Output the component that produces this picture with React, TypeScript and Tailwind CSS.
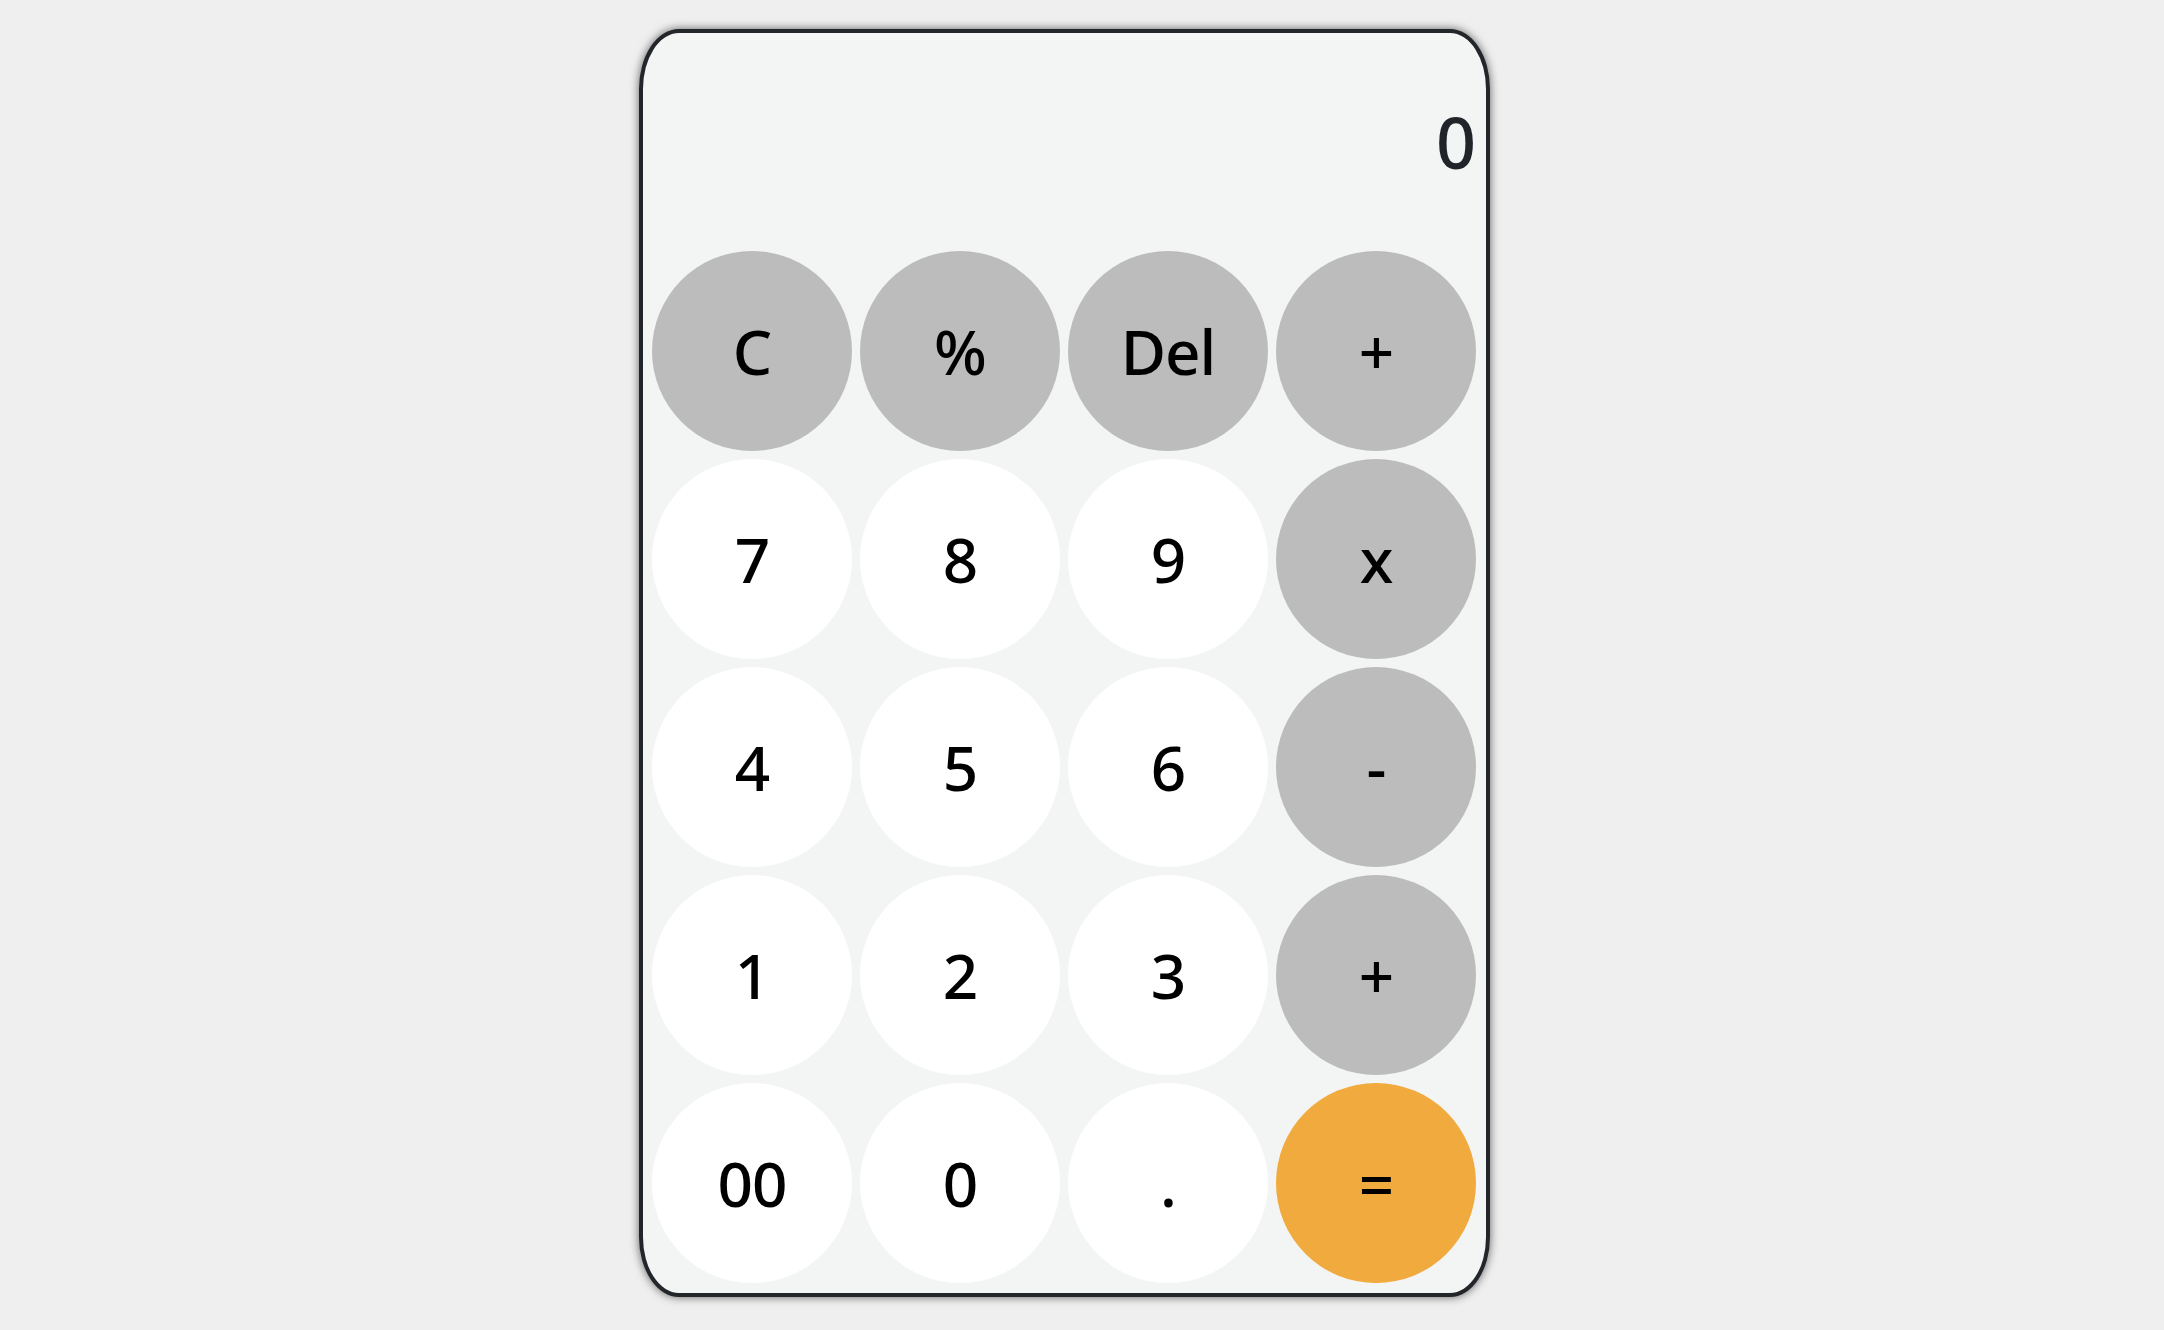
import React from "react";

type Key = { label: string; kind: "op" | "num" | "eq" };

const keys: Key[] = [
  { label: "C", kind: "op" },
  { label: "%", kind: "op" },
  { label: "Del", kind: "op" },
  { label: "+", kind: "op" },
  { label: "7", kind: "num" },
  { label: "8", kind: "num" },
  { label: "9", kind: "num" },
  { label: "x", kind: "op" },
  { label: "4", kind: "num" },
  { label: "5", kind: "num" },
  { label: "6", kind: "num" },
  { label: "-", kind: "op" },
  { label: "1", kind: "num" },
  { label: "2", kind: "num" },
  { label: "3", kind: "num" },
  { label: "+", kind: "op" },
  { label: "00", kind: "num" },
  { label: "0", kind: "num" },
  { label: ".", kind: "num" },
  { label: "=", kind: "eq" },
];

const keyColors = {
  op: "bg-[#bcbcbc]",
  num: "bg-white",
  eq: "bg-[#f1aa3e]",
};

export default function App() {
  return (
    <div className="min-h-screen bg-[#efefef] pt-[29px] pl-[639px]">
      {/* Calculator body */}
      <div className="w-[851px] h-[1268px] rounded-[40px/60px] border-4 border-[#222529] bg-[#f3f5f4] shadow-[0_0_10px_rgba(0,0,0,0.6)] pl-[9px] pr-[10px] pb-[10px] flex flex-col">
        {/* Display */}
        <div className="h-[218px] flex items-center justify-end">
          <span className="font-['Noto_Sans',sans-serif] font-medium text-[70px] leading-none text-[#212529]">
            0
          </span>
        </div>

        {/* Keypad */}
        <div className="grid grid-cols-4 gap-2">
          {keys.map((k, i) => (
            <button
              key={i}
              className={`w-[200px] h-[200px] rounded-full flex items-center justify-center text-black text-[62px] leading-none font-medium tracking-[-1px] font-['Noto_Sans',sans-serif] ${keyColors[k.kind]}`}
            >
              {k.label}
            </button>
          ))}
        </div>
      </div>
    </div>
  );
}
